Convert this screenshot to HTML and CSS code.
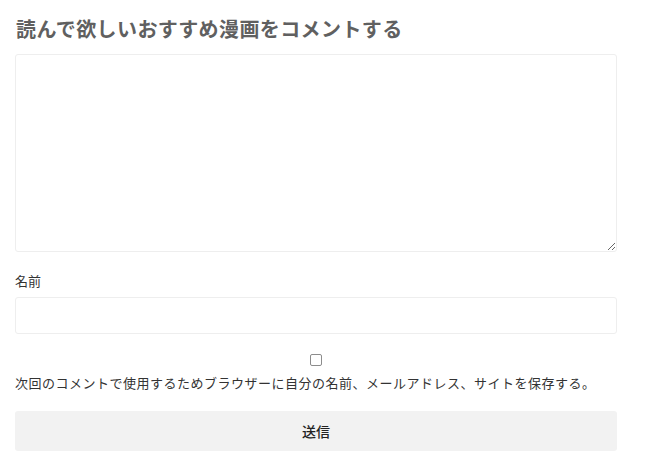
FILE: index.html
```html
<!DOCTYPE html>
<html lang="ja">
<head>
<meta charset="UTF-8">
<title>コメント</title>
<link rel="stylesheet" href="styles.css">
</head>
<body>

<div class="comment-form">
    <h2 class="comment-title">読んで欲しいおすすめ漫画をコメントする</h2>

    <textarea class="comment-text" id="comment"></textarea>

    <label class="field-label" for="author">名前</label>
    <input type="text" class="field-input" id="author">

    <div class="cookie-consent">
        <input type="checkbox" id="cookies">
        <label for="cookies">次回のコメントで使用するためブラウザーに自分の名前、メールアドレス、サイトを保存する。</label>
    </div>

    <button class="submit-button">送信</button>
</div>

</body>
</html>
```

FILE: styles.css
```css
body {
    margin: 0;
    padding: 14px 15px;
    background-color: #fff;
    color: #333;
    font-family: "Noto Sans CJK JP", "Noto Sans", sans-serif;
}

.comment-form {
    width: 602px;
}

.comment-title {
    margin: 0 0 10px 1px;
    font-size: 20px;
    letter-spacing: 0.4px;
    line-height: 30px;
    font-weight: bold;
    color: #606060;
}

.comment-text {
    display: block;
    width: 100%;
    height: 198px;
    margin: 0;
    border: 1px solid #eee;
    border-radius: 3px;
    box-sizing: border-box;
    background: #fff;
}

.field-label {
    display: block;
    margin-top: 19px;
    font-size: 13px;
    line-height: 20px;
    color: #333;
}

.field-input {
    display: block;
    width: 100%;
    height: 37px;
    margin-top: 6px;
    border: 1px solid #eee;
    border-radius: 3px;
    box-sizing: border-box;
}

.cookie-consent {
    margin-top: 20px;
    text-align: center;
}

.cookie-consent input[type="checkbox"] {
    appearance: none;
    display: block;
    width: 12px;
    height: 12px;
    margin: 0 auto;
    border: 1px solid #8c8c8c;
    border-radius: 2px;
    background: #fff;
}

.cookie-consent label {
    display: block;
    margin-top: 7px;
    text-align: left;
    font-size: 13px;
    letter-spacing: 0.5px;
    line-height: 20px;
}

.submit-button {
    display: block;
    width: 100%;
    height: 40px;
    margin-top: 18px;
    border: none;
    border-radius: 3px;
    background-color: #f2f2f2;
    color: #222;
    font-family: "Noto Sans CJK JP", sans-serif;
    font-size: 14px;
    font-weight: 500;
    cursor: pointer;
}
```
